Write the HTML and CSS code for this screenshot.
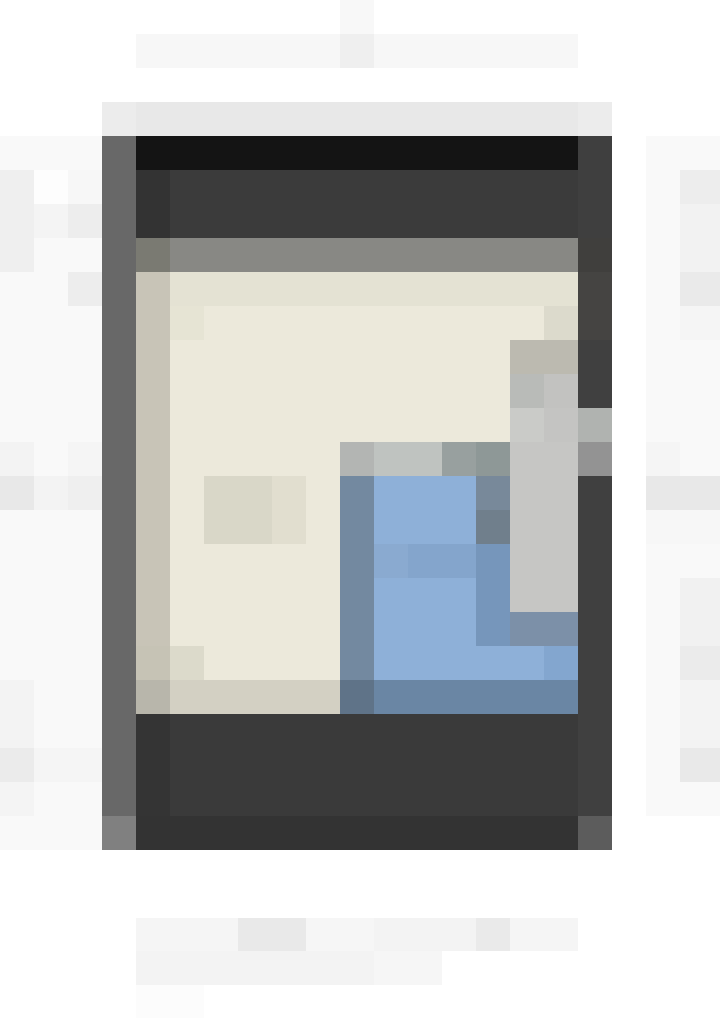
FILE: index.html
```html
<!DOCTYPE html>
<html lang="en">
<head>
<meta charset="utf-8">
<title>Screenshot preview</title>
<link rel="stylesheet" href="styles.css">
</head>
<body>
<div class="page">
  <header class="title">
    <div class="title-tick-row"><span class="title-tick"></span></div>
    <div class="title-line">
      <span class="tl-a"></span><span class="tl-b"></span><span class="tl-c"></span>
    </div>
  </header>

  <main class="gallery">
    <aside class="peek peek-left">
      <div class="pk-card"></div>
      <div class="pl l1"></div>
      <div class="pl l2"></div>
      <div class="pl l3"></div>
      <div class="pl l4"></div>
      <div class="pl l5"></div>
      <div class="pl l6"></div>
      <div class="pl l7"></div>
      <div class="pl l8"></div>
      <div class="pl l9"></div>
      <div class="pl l10"></div>
      <div class="pl l11"></div>
      <div class="pl l12"></div>
      <div class="pl l13"></div>
      <div class="pl l14"></div>
      <div class="pl l15"></div>
    </aside>

    <section class="device">
      <div class="bezel-top"><span class="bt-end"></span><span class="bt-mid"></span><span class="bt-end"></span></div>
      <div class="device-body">
        <div class="bezel-left"><div class="bl-main"></div><div class="bl-foot"></div></div>
        <div class="screen">
          <div class="statusbar"></div>
          <div class="toolbar"><span class="tb-edge"></span><span class="tb-main"></span></div>
          <div class="menubar"><span class="mb-edge"></span><span class="mb-main"></span></div>
          <div class="desktop">
            <div class="d-edge"></div>
            <div class="d-edge-a"></div>
            <div class="d-edge-foot"></div>
            <div class="d-top"></div>
            <div class="d-c2"></div>
            <div class="d-c2b"></div>
            <div class="d-bottom"></div>
            <div class="d-tr"></div>
            <div class="d-icon"></div>
            <div class="d-icon2"></div>
            <div class="window">
              <div class="w-h1"></div>
              <div class="w-h2"></div>
              <div class="w-h3"></div>
              <div class="w-h4"></div>
              <div class="w-left"></div>
              <div class="w-left-foot"></div>
              <div class="w-foot"></div>
              <div class="w-s1"></div>
              <div class="w-s2"></div>
              <div class="w-s3"></div>
              <div class="w-band1"></div>
              <div class="w-band2"></div>
              <div class="w-r18"></div>
              <div class="w-corner"></div>
            </div>
            <div class="panel">
              <div class="p-top"></div>
              <div class="p-a"></div>
              <div class="p-b"></div>
              <div class="p-c"></div>
              <div class="p-d"></div>
            </div>
          </div>
          <div class="dock"><span class="dk-edge"></span><span class="dk-main"></span></div>
          <div class="dock-foot"></div>
        </div>
        <div class="bezel-right">
          <div class="br-a"></div>
          <div class="br-b"></div>
          <div class="br-c"></div>
          <div class="br-d"></div>
          <div class="br-e"></div>
          <div class="br-f"></div>
          <div class="br-g"></div>
          <div class="br-h"></div>
        </div>
      </div>
    </section>

    <aside class="peek peek-right">
      <div class="pk-card-r"></div>
      <div class="pr r1"></div>
      <div class="pr r2"></div>
      <div class="pr r3"></div>
      <div class="pr r4"></div>
      <div class="pr r5"></div>
      <div class="pr r6"></div>
      <div class="pr r7"></div>
      <div class="pr r8"></div>
      <div class="pr r9"></div>
      <div class="pr r10"></div>
      <div class="pr r11"></div>
    </aside>
  </main>

  <footer class="caption">
    <div class="cap-line cap-1">
      <span class="c1a"></span><span class="c1b"></span><span class="c1c"></span><span class="c1d"></span><span class="c1e"></span><span class="c1f"></span>
    </div>
    <div class="cap-line cap-2">
      <span class="c2a"></span><span class="c2b"></span>
    </div>
    <div class="cap-line cap-3">
      <span class="c3a"></span>
    </div>
  </footer>
</div>
</body>
</html>
```

FILE: styles.css
```css
* { box-sizing: border-box; }
html, body { margin: 0; padding: 0; background: #ffffff; }
body { width: 720px; height: 1018px; overflow: hidden; font-family: "Liberation Sans", Arial, sans-serif; }
.page { display: flex; flex-direction: column; width: 720px; }

/* Title */
.title { height: 102px; display: flex; flex-direction: column; }
.title-tick-row { height: 34px; display: flex; padding-left: 340px; }
.title-tick { width: 34px; height: 34px; background: #f8f8f8; }
.title-line { height: 34px; margin-left: 136px; width: 442px; display: flex; }
.tl-a { width: 204px; background: #f7f7f7; }
.tl-b { width: 34px; background: #efefef; }
.tl-c { width: 204px; background: #f7f7f7; }

/* Gallery */
.gallery { height: 748px; display: flex; }

.peek { display: grid; grid-auto-rows: 34px; }
.peek-left { width: 102px; grid-template-columns: 34px 34px 34px; grid-template-rows: repeat(22, 34px); }
.pk-card { grid-area: 2 / 1 / 23 / 4; background: #f9f9f9; }
.l1 { grid-area: 3 / 1 / 6 / 2; background: #efefef; }
.l2 { grid-area: 3 / 3 / 4 / 4; background: #f7f7f7; }
.l3 { grid-area: 4 / 2 / 5 / 3; background: #f4f4f4; }
.l4 { grid-area: 4 / 3 / 5 / 4; background: #ededed; }
.l5 { grid-area: 3 / 2 / 4 / 3; background: #fdfdfd; }
.l6 { grid-area: 6 / 3 / 7 / 4; background: #ededed; }
.l7 { grid-area: 11 / 1 / 12 / 2; background: #f3f3f3; }
.l8 { grid-area: 11 / 3 / 12 / 4; background: #f5f5f5; }
.l9 { grid-area: 12 / 1 / 13 / 2; background: #e8e8e8; }
.l10 { grid-area: 12 / 2 / 13 / 3; background: #f3f3f3; }
.l11 { grid-area: 12 / 3 / 13 / 4; background: #efefef; }
.l12 { grid-area: 18 / 1 / 20 / 2; background: #f3f3f3; }
.l13 { grid-area: 20 / 1 / 21 / 2; background: #ebebeb; }
.l14 { grid-area: 20 / 2 / 21 / 4; background: #f5f5f5; }
.l15 { grid-area: 21 / 1 / 22 / 2; background: #f4f4f4; }

.peek-right { width: 108px; grid-template-columns: 34px 34px 40px; grid-template-rows: repeat(22, 34px); }
.pk-card-r { grid-area: 2 / 2 / 22 / 4; background: #f9f9f9; }
.r1 { grid-area: 3 / 3 / 4 / 4; background: #ededed; }
.r2 { grid-area: 4 / 3 / 6 / 4; background: #f2f2f2; }
.r3 { grid-area: 6 / 3 / 7 / 4; background: #eaeaea; }
.r4 { grid-area: 7 / 3 / 8 / 4; background: #f5f5f5; }
.r5 { grid-area: 11 / 2 / 12 / 3; background: #f5f5f5; }
.r6 { grid-area: 12 / 2 / 13 / 4; background: #e8e8e8; }
.r7 { grid-area: 13 / 2 / 14 / 4; background: #f7f7f7; }
.r8 { grid-area: 15 / 3 / 17 / 4; background: #f1f1f1; }
.r9 { grid-area: 17 / 3 / 18 / 4; background: #ebebeb; }
.r10 { grid-area: 18 / 3 / 20 / 4; background: #f3f3f3; }
.r11 { grid-area: 20 / 3 / 21 / 4; background: #e9e9e9; }

/* Device */
.device { width: 510px; display: flex; flex-direction: column; }
.bezel-top { height: 34px; display: flex; }
.bt-end { width: 34px; background: #ececec; }
.bt-mid { width: 442px; background: #e8e8e8; }
.device-body { height: 714px; display: flex; }

.bezel-left { width: 34px; display: flex; flex-direction: column; }
.bl-main { height: 680px; background: #686868; }
.bl-foot { height: 34px; background: #808080; }

.bezel-right { width: 34px; display: flex; flex-direction: column; }
.br-a { height: 102px; background: #3f3f3f; }
.br-b { height: 34px; background: #403f3d; }
.br-c { height: 68px; background: #454442; }
.br-d { height: 68px; background: #404040; }
.br-e { height: 34px; background: #b0b3b0; }
.br-f { height: 34px; background: #939393; }
.br-g { height: 340px; background: #404040; }
.br-h { height: 34px; background: #5c5c5c; }

.screen { width: 442px; display: flex; flex-direction: column; }
.statusbar { height: 34px; background: #141414; }
.toolbar { height: 68px; display: flex; }
.tb-edge { width: 34px; background: #333333; }
.tb-main { flex: 1; background: #3b3b3b; }
.menubar { height: 34px; display: flex; }
.mb-edge { width: 34px; background: #7a7a72; }
.mb-main { flex: 1; background: #888884; }

.desktop {
  height: 442px;
  background: #ece9db;
  display: grid;
  grid-template-columns: repeat(13, 34px);
  grid-template-rows: repeat(13, 34px);
}
.d-edge { grid-area: 1 / 1 / 12 / 2; background: #c8c4b7; }
.d-edge-a { grid-area: 12 / 1 / 13 / 2; background: #c6c3b5; }
.d-edge-foot { grid-area: 13 / 1 / 14 / 2; background: #b8b6ab; }
.d-top { grid-area: 1 / 2 / 2 / 14; background: #e4e2d3; }
.d-c2 { grid-area: 2 / 2 / 3 / 3; background: #e6e4d4; }
.d-c2b { grid-area: 12 / 2 / 13 / 3; background: #dcdacb; }
.d-bottom { grid-area: 13 / 2 / 14 / 7; background: #d3d0c3; }
.d-tr { grid-area: 2 / 13 / 3 / 14; background: #dcdacc; }
.d-icon { grid-area: 7 / 3 / 9 / 5; background: #d9d7c8; }
.d-icon2 { grid-area: 7 / 5 / 9 / 6; background: #e1decf; }

.window {
  grid-area: 6 / 7 / 14 / 14;
  background: #8eb0d8;
  display: grid;
  grid-template-columns: repeat(7, 34px);
  grid-template-rows: repeat(8, 34px);
}
.w-h1 { grid-area: 1 / 1 / 2 / 2; background: #b3b5b3; }
.w-h2 { grid-area: 1 / 2 / 2 / 4; background: #bfc3c0; }
.w-h3 { grid-area: 1 / 4 / 2 / 5; background: #98a09f; }
.w-h4 { grid-area: 1 / 5 / 2 / 8; background: #8e9897; }
.w-left { grid-area: 2 / 1 / 8 / 2; background: #7389a0; }
.w-left-foot { grid-area: 8 / 1 / 9 / 2; background: #5f7388; }
.w-foot { grid-area: 8 / 2 / 9 / 8; background: #6a86a4; }
.w-s1 { grid-area: 2 / 5 / 3 / 6; background: #78899a; }
.w-s2 { grid-area: 3 / 5 / 4 / 6; background: #707f8c; }
.w-s3 { grid-area: 4 / 5 / 7 / 6; background: #7696bb; }
.w-band1 { grid-area: 4 / 2 / 5 / 3; background: #8aaad0; }
.w-band2 { grid-area: 4 / 3 / 5 / 5; background: #84a5cc; }
.w-r18 { grid-area: 6 / 6 / 7 / 8; background: #7c90a8; }
.w-corner { grid-area: 7 / 7 / 8 / 8; background: #83a6cf; }

.panel {
  grid-area: 3 / 12 / 11 / 14;
  z-index: 1;
  background: #c6c6c4;
  display: grid;
  grid-template-columns: repeat(2, 34px);
  grid-template-rows: repeat(8, 34px);
}
.p-top { grid-area: 1 / 1 / 2 / 3; background: #bcbab0; }
.p-a { grid-area: 2 / 1 / 3 / 2; background: #b9bbb8; }
.p-b { grid-area: 2 / 2 / 3 / 3; background: #c2c2c0; }
.p-c { grid-area: 3 / 1 / 4 / 2; background: #cacbc8; }
.p-d { grid-area: 3 / 2 / 4 / 3; background: #c4c4c2; }

.dock { height: 102px; display: flex; }
.dk-edge { width: 34px; background: #343434; }
.dk-main { flex: 1; background: #3a3a3a; }
.dock-foot { height: 34px; background: #333333; }

/* Caption */
.caption { height: 168px; padding-top: 68px; display: flex; flex-direction: column; }
.cap-line { height: 34px; display: flex; margin-left: 136px; }
.c1a { width: 102px; background: #f5f5f5; }
.c1b { width: 68px; background: #e9e9e9; }
.c1c { width: 68px; background: #f6f6f6; }
.c1d { width: 102px; background: #f3f3f3; }
.c1e { width: 34px; background: #eaeaea; }
.c1f { width: 68px; background: #f5f5f5; }
.c2a { width: 238px; background: #f3f3f3; }
.c2b { width: 68px; background: #f6f6f6; }
.c3a { width: 68px; background: #fcfcfc; }
```
